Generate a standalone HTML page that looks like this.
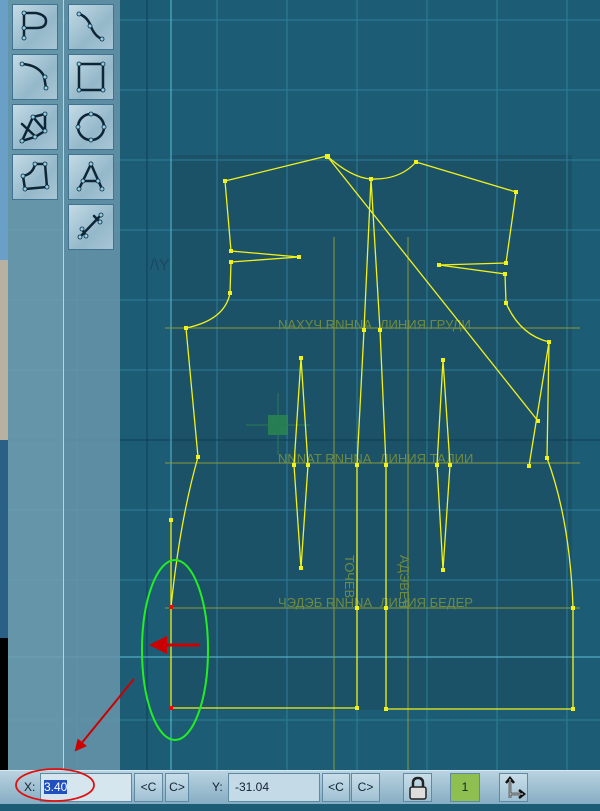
<!DOCTYPE html>
<html><head><meta charset="utf-8"><style>
*{margin:0;padding:0;box-sizing:border-box}
body{width:600px;height:804px;overflow:hidden;background:#1d5c75;font-family:"Liberation Sans",sans-serif;position:relative}
.abs{position:absolute}
.btn{position:absolute;width:46px;height:46px;border:1px solid #3f7391;background:linear-gradient(135deg,#c4dbe6,#94b8ca 60%,#a9c6d5)}
.bb{position:absolute;top:773px;height:29px;border:1px solid #5e8aa3;background:linear-gradient(#c9dfea,#9fc0d2);font-size:12px;color:#123;text-align:center;line-height:27px}
</style></head><body>
<svg class="abs" style="left:0;top:0" width="600" height="804">
<defs>
<marker id="ah" markerWidth="6" markerHeight="6" refX="5" refY="3" orient="auto"><path d="M0,0L6,3L0,6z" fill="#c00"/></marker>
</defs>
<rect x="0" y="0" width="600" height="804" fill="#1d5c75"/>
<rect x="170" y="155" width="402" height="555" fill="#1b5268"/>
<g stroke="#2f8aa5" stroke-width="1" opacity="0.8">
<line x1="77" y1="0" x2="77" y2="770"/><line x1="217" y1="0" x2="217" y2="770"/><line x1="287" y1="0" x2="287" y2="770"/><line x1="357" y1="0" x2="357" y2="770"/><line x1="427" y1="0" x2="427" y2="770"/><line x1="497" y1="0" x2="497" y2="770"/><line x1="567" y1="0" x2="567" y2="770"/>
<line x1="0" y1="20" x2="600" y2="20"/><line x1="0" y1="90" x2="600" y2="90"/><line x1="0" y1="160" x2="600" y2="160"/><line x1="0" y1="230" x2="600" y2="230"/><line x1="0" y1="300" x2="600" y2="300"/><line x1="0" y1="370" x2="600" y2="370"/><line x1="0" y1="510" x2="600" y2="510"/><line x1="0" y1="580" x2="600" y2="580"/><line x1="0" y1="720" x2="600" y2="720"/>
</g>
<line x1="147" y1="0" x2="147" y2="770" stroke="#0e3c55"/>
<line x1="0" y1="440" x2="600" y2="440" stroke="#0e3c55"/>
<line x1="171" y1="0" x2="171" y2="770" stroke="#5cc0d8"/>
<line x1="0" y1="657" x2="600" y2="657" stroke="#5cc0d8"/>
<rect x="0" y="0" width="8" height="260" fill="#6aa0c8"/>
<rect x="0" y="260" width="8" height="180" fill="#b8b0a0"/>
<rect x="0" y="440" width="8" height="200" fill="#2a5f86"/>
<rect x="0" y="638" width="8" height="132" fill="#000"/>
<rect x="8" y="0" width="55" height="770" fill="#6f9db0" opacity="0.88"/>
<rect x="63" y="0" width="57" height="770" fill="#6794a8" opacity="0.88"/>
<line x1="63.5" y1="0" x2="63.5" y2="770" stroke="#b8d4e0"/>
<g stroke="#8a9a3a" stroke-width="1" fill="none">
<line x1="165" y1="328" x2="580" y2="328"/><line x1="165" y1="463" x2="580" y2="463"/><line x1="165" y1="608" x2="580" y2="608"/>
<line x1="334" y1="237" x2="334" y2="770"/><line x1="408" y1="237" x2="408" y2="770"/>
</g>
<g fill="#6f8a40" font-size="13" font-family="Liberation Sans">
<text x="278" y="329">NAXYЧ RNHNA</text><text x="380" y="329">ЛИНИЯ ГРУДИ</text>
<text x="278" y="463">NNNAT RNHNA</text><text x="380" y="463">ЛИНИЯ ТАЛИИ</text>
<text x="278" y="607">ЧЭДЭБ RNHNA</text><text x="380" y="607">ЛИНИЯ БЕДЕР</text>
<text x="345" y="555" transform="rotate(90 345 555)">ТОЧЕВ</text>
<text x="400" y="555" transform="rotate(90 400 555)">АДЭВЕЧ</text>
</g>
<rect x="268" y="415" width="20" height="20" fill="#2a8a50" opacity="0.8"/>
<g stroke="#2a7a50" stroke-width="1"><line x1="246" y1="425" x2="310" y2="425"/><line x1="278" y1="393" x2="278" y2="455"/></g>
<text x="150" y="270" fill="#1a4a60" font-size="16">/\Y</text>
<text x="300" y="447" fill="#1a4a60" font-size="14">&gt;</text>
<g stroke="#f2f21a" stroke-width="1.3" fill="none">
<path d="M225,181L327,156Q352,178 371,179Q400,180 416,162L516,192"/>
<path d="M225,181L231,251L299,257L231,262L230,293Q225,320 186,328L198,457Q180,520 171,607L171,708L357,708"/>
<path d="M386,709L573,709L573,608Q570,520 547,458L549,342Q520,335 506,303L505,274L439,265L506,263L516,192"/>
<path d="M549,342L529,466"/>
<path d="M327,156L538,421"/>
<path d="M371,179L364,330L357,465L357,708"/><path d="M371,179L380,330L386,465L386,709"/>
<path d="M301,358L294,465L301,568L308,465Z"/>
<path d="M443,360L437,465L443,570L450,465Z"/>
<line x1="171" y1="520" x2="171" y2="607"/>
</g>
<g fill="#f2f21a">
<rect x="223" y="179" width="4" height="4"/><rect x="325" y="154" width="5" height="5"/><rect x="369" y="177" width="4" height="4"/><rect x="414" y="160" width="4" height="4"/><rect x="514" y="190" width="4" height="4"/>
<rect x="229" y="249" width="4" height="4"/><rect x="297" y="255" width="4" height="4"/><rect x="229" y="260" width="4" height="4"/><rect x="228" y="291" width="4" height="4"/><rect x="184" y="326" width="4" height="4"/><rect x="196" y="455" width="4" height="4"/>
<rect x="504" y="261" width="4" height="4"/><rect x="437" y="263" width="4" height="4"/><rect x="503" y="272" width="4" height="4"/><rect x="504" y="301" width="4" height="4"/><rect x="547" y="340" width="4" height="4"/><rect x="536" y="419" width="4" height="4"/><rect x="527" y="464" width="4" height="4"/><rect x="545" y="456" width="4" height="4"/>
<rect x="362" y="328" width="4" height="4"/><rect x="378" y="328" width="4" height="4"/><rect x="355" y="463" width="4" height="4"/><rect x="384" y="463" width="4" height="4"/>
<rect x="299" y="356" width="4" height="4"/><rect x="292" y="463" width="4" height="4"/><rect x="306" y="463" width="4" height="4"/><rect x="299" y="566" width="4" height="4"/>
<rect x="441" y="358" width="4" height="4"/><rect x="435" y="463" width="4" height="4"/><rect x="448" y="463" width="4" height="4"/><rect x="441" y="568" width="4" height="4"/>
<rect x="169" y="518" width="4" height="4"/><rect x="355" y="606" width="4" height="4"/><rect x="384" y="606" width="4" height="4"/><rect x="571" y="606" width="4" height="4"/>
<rect x="355" y="706" width="4" height="4"/><rect x="384" y="707" width="4" height="4"/><rect x="571" y="707" width="4" height="4"/>
</g>
<rect x="169" y="605" width="4" height="4" fill="#f00"/><rect x="169" y="706" width="4" height="4" fill="#f00"/>
<ellipse cx="175" cy="650" rx="33" ry="90" fill="none" stroke="#22ee22" stroke-width="2"/>
<line x1="200" y1="645" x2="152" y2="645" stroke="#c00" stroke-width="3" marker-end="url(#ah)"/>
<line x1="134" y1="679" x2="76" y2="750" stroke="#c00" stroke-width="2" marker-end="url(#ah)"/>
</svg>
<div class="btn" style="left:12px;top:4px"></div><div class="btn" style="left:68px;top:4px"></div>
<div class="btn" style="left:12px;top:54px"></div><div class="btn" style="left:68px;top:54px"></div>
<div class="btn" style="left:12px;top:104px"></div><div class="btn" style="left:68px;top:104px"></div>
<div class="btn" style="left:12px;top:154px"></div><div class="btn" style="left:68px;top:154px"></div>
<div class="btn" style="left:68px;top:204px"></div>
<svg class="abs" style="left:0;top:0" width="120" height="260">
<g stroke="#0d2535" stroke-width="2.5" fill="none" stroke-linecap="round">
<path d="M24,13L24,38M24,13L36,13Q46,15 46,21Q46,28 36,28L24,28"/>
<path d="M79,14Q86,16 90,24Q94,36 102,39"/>
<path d="M22,64Q38,65 44,76L46,88"/>
<rect x="79" y="64" width="24" height="26"/>
<circle cx="91" cy="127" r="13"/>
<path d="M79,189L91,164L102,189M83,181L98,181"/>
<path d="M22,141L33,117L45,114L45,131L35,137ZM22,124L36,137M33,117L45,131"/>
<path d="M23,176Q33,174 35,164L45,164L47,187L25,189Z"/>
<path d="M80,237L101,215M82,229L86,236M94,216L100,222"/>
</g>
<g fill="#8fd0ea" stroke="#0d2535" stroke-width="0.8">
<circle cx="24" cy="13" r="2"/><circle cx="24" cy="28" r="2"/><circle cx="24" cy="38" r="2"/>
<circle cx="79" cy="14" r="2"/><circle cx="90" cy="26" r="2"/><circle cx="102" cy="39" r="2"/>
<circle cx="22" cy="64" r="2"/><circle cx="45" cy="77" r="2"/><circle cx="46" cy="88" r="2"/>
<circle cx="79" cy="64" r="2"/><circle cx="103" cy="64" r="2"/><circle cx="79" cy="90" r="2"/><circle cx="103" cy="90" r="2"/>
<circle cx="91" cy="114" r="2"/><circle cx="78" cy="127" r="2"/><circle cx="104" cy="127" r="2"/><circle cx="91" cy="140" r="2"/>
<circle cx="91" cy="164" r="2"/><circle cx="83" cy="181" r="2"/><circle cx="98" cy="181" r="2"/><circle cx="79" cy="189" r="2"/><circle cx="102" cy="189" r="2"/>
<circle cx="22" cy="141" r="2"/><circle cx="33" cy="117" r="2"/><circle cx="45" cy="114" r="2"/><circle cx="45" cy="131" r="2"/><circle cx="35" cy="137" r="2"/>
<circle cx="23" cy="176" r="2"/><circle cx="35" cy="164" r="2"/><circle cx="45" cy="164" r="2"/><circle cx="47" cy="187" r="2"/><circle cx="25" cy="189" r="2"/>
<circle cx="80" cy="237" r="2"/><circle cx="101" cy="215" r="2"/><circle cx="82" cy="229" r="2"/><circle cx="86" cy="236" r="2"/><circle cx="100" cy="222" r="2"/>
</g>
</svg>
<div class="abs" style="left:0;top:770px;width:600px;height:34px;background:linear-gradient(#b9d3e0,#86adc3);border-top:1px solid #d8e8f0"></div>
<div class="abs" style="left:24px;top:780px;font-size:12px;color:#123">X:</div>
<div class="bb" style="left:40px;width:92px;text-align:left;padding-left:3px;background:#d6e6ee"><span style="background:#2050c0;color:#fff">3.40</span></div>
<div class="bb" style="left:134px;width:29px">&lt;C</div>
<div class="bb" style="left:165px;width:24px">C&gt;</div>
<div class="abs" style="left:212px;top:780px;font-size:12px;color:#123">Y:</div>
<div class="bb" style="left:228px;width:92px;text-align:left;padding-left:6px;background:#c4dae6">-31.04</div>
<div class="bb" style="left:322px;width:28px">&lt;C</div>
<div class="bb" style="left:351px;width:29px">C&gt;</div>
<div class="bb" style="left:403px;width:29px"><svg width="27" height="27"><path d="M9,13V9Q9,4 14,4Q19,4 19,9V13" stroke="#222" stroke-width="2.5" fill="none"/><rect x="6" y="13" width="16" height="12" rx="2" fill="#ddd" stroke="#222" stroke-width="1.5"/></svg></div>
<div class="bb" style="left:450px;width:30px;background:#8fbf50">1</div>
<div class="bb" style="left:499px;width:29px"><svg width="27" height="27"><path d="M10,24V5M6,9L10,4L14,9M10,20H23M19,16L24,20L19,24" stroke="#111" stroke-width="2.5" fill="none"/><path d="M10,24V5M10,20H23" stroke="#eee" stroke-width="1" fill="none"/></svg></div>
<svg class="abs" style="left:0;top:0" width="600" height="804"><ellipse cx="55" cy="785" rx="39" ry="16" fill="none" stroke="#e01010" stroke-width="1.8"/></svg>
</body></html>
